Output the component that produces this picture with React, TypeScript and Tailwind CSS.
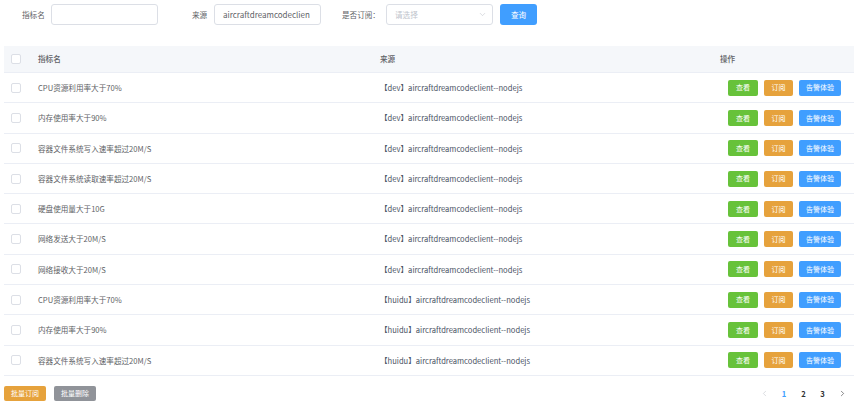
import { ChevronDown, ChevronLeft, ChevronRight } from "lucide-react";

const rows = [
  { name: "CPU资源利用率大于70%", env: "dev" },
  { name: "内存使用率大于90%", env: "dev" },
  { name: "容器文件系统写入速率超过20M/S", env: "dev" },
  { name: "容器文件系统读取速率超过20M/S", env: "dev" },
  { name: "硬盘使用量大于10G", env: "dev" },
  { name: "网络发送大于20M/S", env: "dev" },
  { name: "网络接收大于20M/S", env: "dev" },
  { name: "CPU资源利用率大于70%", env: "huidu" },
  { name: "内存使用率大于90%", env: "huidu" },
  { name: "容器文件系统写入速率超过20M/S", env: "huidu" },
];

function Checkbox() {
  return <span className="block h-[10px] w-[10px] rounded-[2px] border border-[#dcdfe6] bg-white" />;
}

export default function App() {
  return (
    <div
      className="h-[410px] w-[864px] overflow-hidden bg-white text-[7.6px] text-[#606266]"
      style={{ fontFamily: '"Noto Sans CJK SC", "Noto Sans", sans-serif' }}
    >
      {/* Search form */}
      <div className="mt-[4px] flex h-[21px] items-center">
        <span className="ml-[22px] w-[29px]">指标名</span>
        <div className="h-[21px] w-[107px] rounded-[3px] border border-[#dcdfe6]" />
        <span className="ml-[34px] w-[22px]">来源</span>
        <div className="flex h-[21px] w-[107px] items-center overflow-hidden whitespace-nowrap rounded-[3px] border border-[#dcdfe6] pl-[8px] text-[8px] text-[#606266]">
          aircraftdreamcodeclien
        </div>
        <span className="ml-[21px] w-[44px]">是否订阅：</span>
        <div className="flex h-[21px] w-[107px] items-center justify-between rounded-[3px] border border-[#dcdfe6] pl-[8px] pr-[5px] text-[#c0c4cc]">
          <span>请选择</span>
          <ChevronDown size={9} strokeWidth={1.5} />
        </div>
        <button className="ml-[7px] h-[21px] w-[37px] rounded-[3px] bg-[#409eff] text-white">查询</button>
      </div>

      {/* Table */}
      <div className="ml-[4px] mt-[21px] w-[850px]">
        <div className="flex h-[27px] items-center border-b border-[#ebeef5] bg-[#f5f7fa] font-medium text-[#606266]">
          <div className="w-[34px] pl-[7px]">
            <Checkbox />
          </div>
          <div className="w-[342px]">指标名</div>
          <div className="w-[340px]">来源</div>
          <div className="flex-1">操作</div>
        </div>
        {rows.map((r, i) => (
          <div key={i} className="flex h-[30.3px] items-center border-b border-[#ebeef5]">
            <div className="w-[34px] pl-[7px]">
              <Checkbox />
            </div>
            <div className="w-[342px]">{r.name}</div>
            <div className="w-[340px] text-[#4a5365]">
              【{r.env}】aircraftdreamcodeclient--nodejs
            </div>
            <div className="flex flex-1 gap-[6px] pl-[8px] text-[7px] text-white">
              <button className="h-[16px] w-[30px] rounded-[2px] bg-[#67c23a]">查看</button>
              <button className="h-[16px] w-[29px] rounded-[2px] bg-[#e6a23c]">订阅</button>
              <button className="h-[16px] w-[42px] rounded-[2px] bg-[#409eff]">告警体验</button>
            </div>
          </div>
        ))}
      </div>

      {/* Footer */}
      <div className="mt-[10px] flex items-center">
        <button className="ml-[4px] h-[15px] w-[42px] rounded-[2px] bg-[#e6a23c] text-[7px] text-white">批量订阅</button>
        <button className="ml-[8px] h-[15px] w-[42px] rounded-[2px] bg-[#909399] text-[7px] text-white">批量删除</button>
        <div className="ml-auto mr-[12px] flex items-center font-semibold text-[#303133]">
          <span className="flex w-[20px] justify-center text-[#c0c4cc]">
            <ChevronLeft size={9} strokeWidth={1.5} />
          </span>
          <span className="flex w-[20px] justify-center text-[#409eff]">1</span>
          <span className="flex w-[19px] justify-center">2</span>
          <span className="flex w-[19px] justify-center">3</span>
          <span className="flex w-[20px] justify-center">
            <ChevronRight size={9} strokeWidth={1.5} />
          </span>
        </div>
      </div>
    </div>
  );
}
